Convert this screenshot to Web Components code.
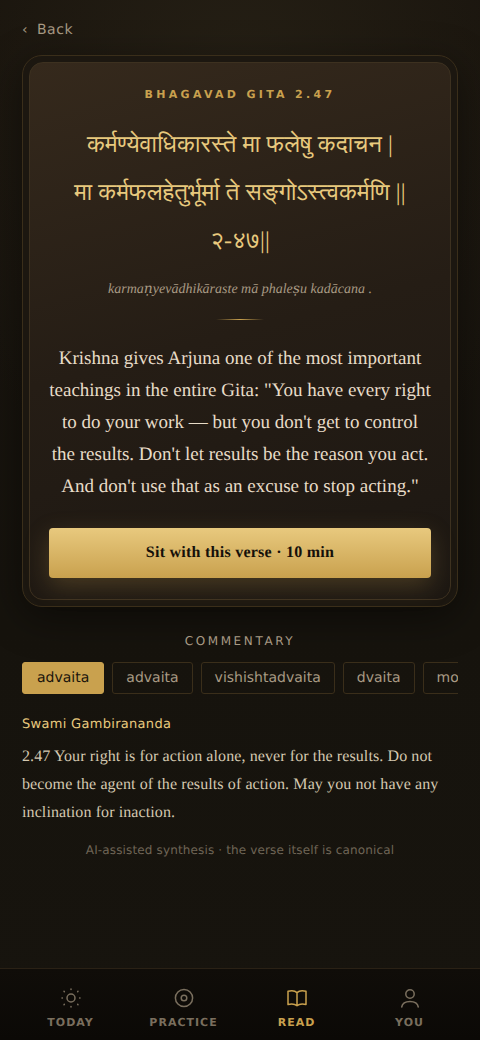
<!DOCTYPE html>
<html lang="en">
<head>
<meta charset="utf-8">
<title>Verse</title>
<style>
    html, body {
        margin: 0;
        height: 100%;
        background: #0f0c09;
    }
    body {
        font-family: "DejaVu Sans", sans-serif;
        text-rendering: geometricPrecision;
        overflow: hidden;
    }
    i {
        font-family: "DejaVu Serif", serif;
    }
</style>
</head>
<body>
<app-shell>
    <back-link>Back</back-link>
    <verse-card action="Sit with this verse · 10 min" label="BHAGAVAD GITA 2.47">
        <span slot="sanskrit">कर्मण्येवाधिकारस्ते मा फलेषु कदाचन |<br>मा कर्मफलहेतुर्भूर्मा ते सङ्गोऽस्त्वकर्मणि ||<br>२-४७||</span>
        <span slot="translit">karma<i>ṇ</i>yevādhikāraste mā phale<i>ṣ</i>u kadācana .</span>
        Krishna gives Arjuna one of the most important teachings in the entire Gita: "You have every right to do your work — but you don't get to control the results. Don't let results be the reason you act. And don't use that as an excuse to stop acting."
    </verse-card>
    <commentary-panel
        author="Swami Gambirananda"
        note="AI-assisted synthesis · the verse itself is canonical">
        <school-tab slot="tabs" active>advaita</school-tab>
        <school-tab slot="tabs">advaita</school-tab>
        <school-tab slot="tabs">vishishtadvaita</school-tab>
        <school-tab slot="tabs">dvaita</school-tab>
        <school-tab slot="tabs">modern</school-tab>
        2.47 Your right is for action alone, never for the results. Do not become the agent of the results of action. May you not have any inclination for inaction.
    </commentary-panel>
    <bottom-nav>
        <nav-item label="TODAY">
            <svg viewBox="0 0 24 24"><circle cx="12" cy="12" r="4"/><path d="M12 3v.4M12 20.600v.4M3 12h.4M20.600 12h.4M5 5.300l.3.3M18.700 18.400l.3.3M5 18.700l.3-.3M18.700 5.600l.3-.3"/></svg>
        </nav-item>
        <nav-item label="PRACTICE">
            <svg viewBox="0 0 24 24"><circle cx="12" cy="12" r="8.600"/><circle cx="12" cy="12" r="2.800"/></svg>
        </nav-item>
        <nav-item label="READ" active>
            <svg viewBox="0 0 24 24"><path d="M3 5.300c3.500-.8 7-.6 9 1.300 2-1.900 5.500-2.100 9-1.300v13.200c-3.500-.8-7-.5-9 1.300-2-1.800-5.500-2.100-9-1.300zM12 6.600v13.200"/></svg>
        </nav-item>
        <nav-item label="YOU">
            <svg viewBox="0 0 24 24"><circle cx="12" cy="8" r="4.200"/><path d="M3.700 21c.6-3.500 4-5.500 8.300-5.500s7.700 2 8.300 5.500"/></svg>
        </nav-item>
    </bottom-nav>
</app-shell>

<script>
class AppShell extends HTMLElement {
    constructor() {
        super();
        this.attachShadow({ mode: 'open' });
        this.shadowRoot.innerHTML = `
            <style>
                :host {
                    display: flex;
                    flex-direction: column;
                    height: 1040px;
                    box-sizing: border-box;
                    padding: 0 22px;
                    background:
                        radial-gradient(ellipse 300px 420px at 50% 130px, #262015 0%, rgba(38, 32, 21, 0) 100%),
                        linear-gradient(180deg, #1a150e 0%, #16130d 60%, #17140e 100%);
                }
            </style>
            <slot></slot>
        `;
    }
}

class BackLink extends HTMLElement {
    constructor() {
        super();
        this.attachShadow({ mode: 'open' });
        this.shadowRoot.innerHTML = `
            <style>
                :host {
                    display: flex;
                    align-items: center;
                    gap: 10px;
                    height: 55px;
                    padding-top: 5px;
                    box-sizing: border-box;
                    font-size: 14px;
                    letter-spacing: 0.5px;
                    color: #a89a84;
                }
                .chev { font-size: 14px; width: 5px; }
            </style>
            <span class="chev">‹</span>
            <slot></slot>
        `;
    }
}

class VerseCard extends HTMLElement {
    constructor() {
        super();
        this.attachShadow({ mode: 'open' });
    }

    connectedCallback() {
        this.shadowRoot.innerHTML = `
            <style>
                :host {
                    display: block;
                    padding: 6px;
                    border: 1px solid #3a2e1a;
                    border-radius: 20px;
                    box-shadow: 0 10px 40px rgba(0, 0, 0, 0.45);
                    background: #1c1710;
                }
                .inner {
                    border: 1px solid #3d3120;
                    border-radius: 14px;
                    padding: 25px 19px 21px;
                    background: linear-gradient(165deg, #35291c 0%, #251d15 50%, #1c1712 100%);
                    display: flex;
                    flex-direction: column;
                    align-items: center;
                }
                .label {
                    font-size: 11px;
                    font-weight: 700;
                    letter-spacing: 3.3px;
                    color: #c9a14e;
                    line-height: 14px;
                }
                .sanskrit {
                    margin-top: 19px;
                    font-family: "Liberation Serif", "FreeSans", serif;
                    font-size: 24px;
                    letter-spacing: 0.1px;
                    line-height: 48px;
                    color: #e8c97e;
                    text-align: center;
                }
                .translit {
                    margin-top: 12px;
                    font-family: "Liberation Serif", serif;
                    font-style: italic;
                    font-size: 14px;
                    line-height: 24px;
                    color: #a89a84;
                    text-align: center;
                }
                ::slotted([slot="translit"]) { font-style: italic; }
                .rule {
                    width: 48px;
                    height: 1px;
                    margin: 17px 0 22px;
                    background: linear-gradient(90deg, transparent, #c9a14e, transparent);
                }
                .gloss {
                    padding-top: 1px;
                    font-family: "Liberation Serif", serif;
                    font-size: 19px;
                    line-height: 32px;
                    color: #e8dcc8;
                    text-align: center;
                }
                button {
                    width: 100%;
                    height: 50px;
                    margin-top: 25px;
                    border: 0;
                    border-radius: 4px;
                    font-family: "Liberation Serif", serif;
                    font-weight: 700;
                    font-size: 16px;
                    letter-spacing: 0.25px;
                    color: #15100a;
                    background: linear-gradient(180deg, #e8c97e 0%, #c9a14e 100%);
                    box-shadow: 0 8px 24px rgba(201, 161, 78, 0.25);
                    text-rendering: inherit;
                }
            </style>
            <div class="inner">
                <div class="label">${this.getAttribute('label')}</div>
                <div class="sanskrit"><slot name="sanskrit"></slot></div>
                <div class="translit"><slot name="translit"></slot></div>
                <div class="rule"></div>
                <div class="gloss"><slot></slot></div>
                <button>${this.getAttribute('action')}</button>
            </div>
        `;
    }
}

class SchoolTab extends HTMLElement {
    constructor() {
        super();
        this.attachShadow({ mode: 'open' });
        this.shadowRoot.innerHTML = `
            <style>
                :host {
                    flex: none;
                    display: block;
                    padding: 0 13px;
                    height: 30px;
                    line-height: 30px;
                    border: 1px solid #3a2e1a;
                    border-radius: 3px;
                    font-size: 14px;
                    color: #a89a84;
                }
                :host([active]) {
                    padding: 0 14px;
                    background: #c9a14e;
                    border-color: #c9a14e;
                    color: #1a140c;
                }
            </style>
            <slot></slot>
        `;
    }
}

class CommentaryPanel extends HTMLElement {
    constructor() {
        super();
        this.attachShadow({ mode: 'open' });
    }

    connectedCallback() {
        this.shadowRoot.innerHTML = `
            <style>
                :host { display: block; }
                h2 {
                    margin: 27px 0 0;
                    font-size: 12px;
                    font-weight: 400;
                    line-height: 14px;
                    letter-spacing: 2.6px;
                    text-align: center;
                    color: #a89a84;
                }
                .tabs {
                    display: flex;
                    gap: 8px;
                    overflow: hidden;
                    margin-top: 14px;
                }
                .author {
                    margin-top: 22px;
                    font-size: 13px;
                    line-height: 18px;
                    letter-spacing: 0.3px;
                    color: #e8c97e;
                }
                .body {
                    margin-top: 9px;
                    font-family: "Liberation Serif", serif;
                    font-size: 16px;
                    letter-spacing: 0.1px;
                    line-height: 28px;
                    color: #d4c8b0;
                }
                .note {
                    margin-top: 14px;
                    font-size: 12px;
                    line-height: 18px;
                    letter-spacing: 0.14px;
                    text-align: center;
                    color: #6f6556;
                }
            </style>
            <h2>COMMENTARY</h2>
            <div class="tabs"><slot name="tabs"></slot></div>
            <div class="author">${this.getAttribute('author')}</div>
            <div class="body"><slot></slot></div>
            <div class="note">${this.getAttribute('note')}</div>
        `;
    }
}

class BottomNav extends HTMLElement {
    constructor() {
        super();
        this.attachShadow({ mode: 'open' });
        this.shadowRoot.innerHTML = `
            <style>
                :host {
                    display: grid;
                    grid-template-columns: repeat(4, 1fr);
                    margin: auto -22px 0;
                    padding: 0 14px;
                    height: 71px;
                    border-top: 1px solid #2a2115;
                    background: linear-gradient(180deg, #100d09, #0b0906);
                }
            </style>
            <slot></slot>
        `;
    }
}

class NavItem extends HTMLElement {
    constructor() {
        super();
        this.attachShadow({ mode: 'open' });
    }

    connectedCallback() {
        this.shadowRoot.innerHTML = `
            <style>
                :host {
                    display: flex;
                    flex-direction: column;
                    align-items: center;
                    padding-top: 17px;
                    color: #7a6f5e;
                    font-size: 11px;
                    font-weight: 700;
                    letter-spacing: 1px;
                }
                :host([active]) { color: #c9a14e; }
                ::slotted(svg) {
                    width: 24px;
                    height: 24px;
                    fill: none;
                    stroke: currentColor;
                    stroke-width: 1.5;
                    stroke-linecap: round;
                    stroke-linejoin: round;
                }
                span { margin-top: 6px; line-height: 14px; }
            </style>
            <slot></slot>
            <span>${this.getAttribute('label')}</span>
        `;
    }
}

customElements.define('app-shell', AppShell);
customElements.define('back-link', BackLink);
customElements.define('verse-card', VerseCard);
customElements.define('school-tab', SchoolTab);
customElements.define('commentary-panel', CommentaryPanel);
customElements.define('bottom-nav', BottomNav);
customElements.define('nav-item', NavItem);
</script>
</body>
</html>
